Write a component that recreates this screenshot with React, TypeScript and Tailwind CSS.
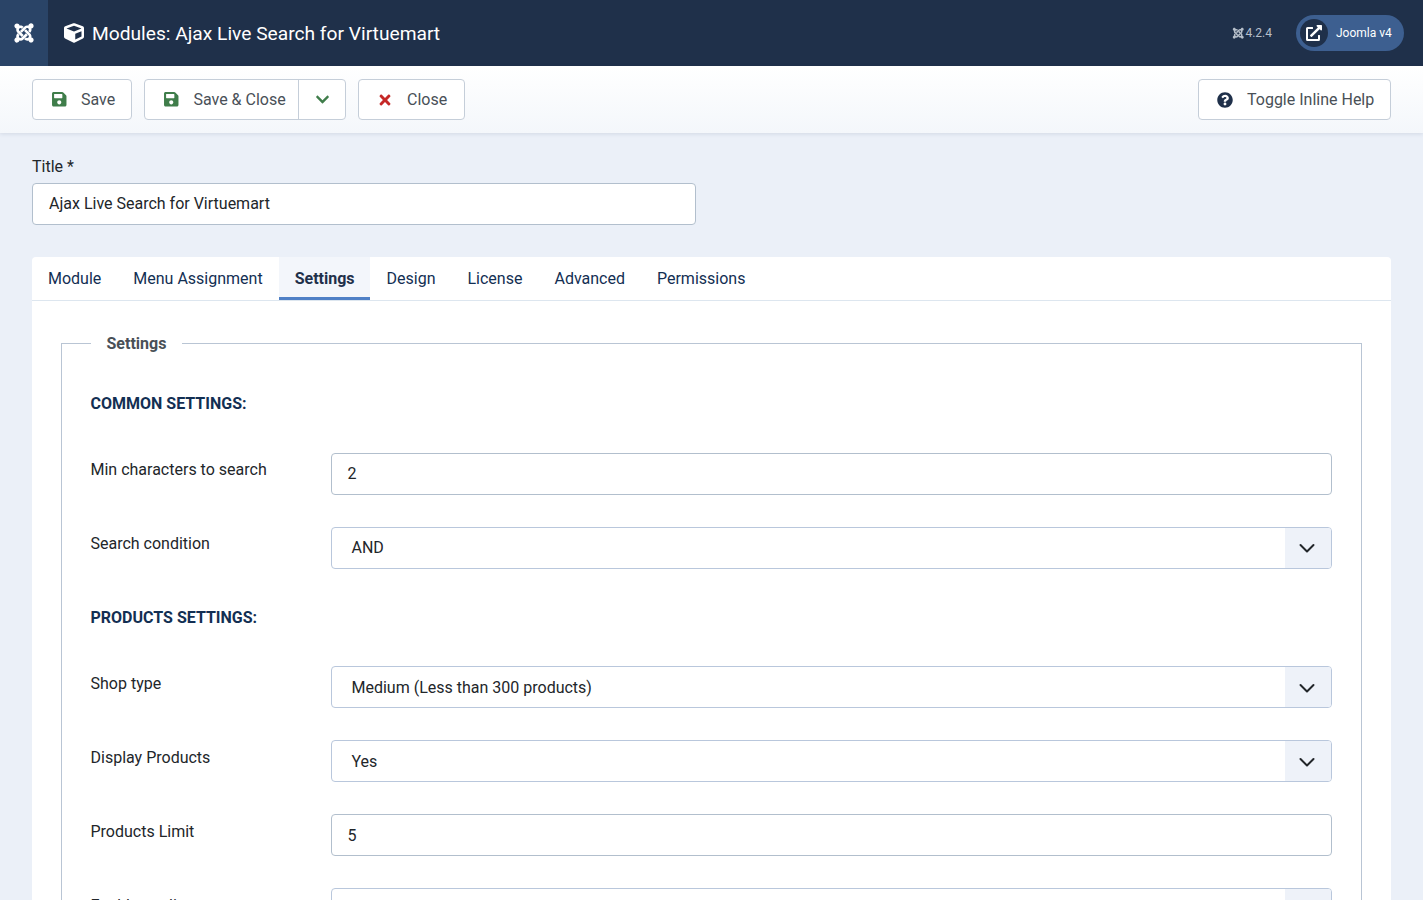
import { FaCube, FaChevronDown, FaExternalLinkAlt, FaJoomla, FaQuestionCircle, FaSave, FaTimes } from "react-icons/fa";
import type { ReactNode } from "react";

const tabs = ["Module", "Menu Assignment", "Settings", "Design", "License", "Advanced", "Permissions"];

function ToolbarButton({ icon, label, className }: { icon: ReactNode; label: string; className?: string }) {
  return (
    <button className={`flex h-[41px] items-center rounded border border-[#c5ced9] bg-white pl-[17px] text-[16px] text-[#495057] ${className ?? ""}`}>
      <span className="mr-[13px] flex w-[18px] justify-center">{icon}</span>
      {label}
    </button>
  );
}

function Row({ label, children, className, low }: { label: string; children: ReactNode; className?: string; low?: boolean }) {
  return (
    <div className={`flex ${className ?? ""}`}>
      <label className={`w-[240px] shrink-0 indent-[-0.5px] text-[16px] leading-6 text-[#22262a] ${low ? "pt-[6px]" : "pt-[5px]"}`}>{label}</label>
      <div className="min-w-0 flex-1">{children}</div>
    </div>
  );
}

function TextBox({ value, className, low }: { value: string; className?: string; low?: boolean }) {
  return (
    <div className={`flex h-[42px] items-center rounded border border-[#b2bfcd] bg-white text-[16px] text-[#22262a] ${className ?? "px-[15.5px]"}`}>
      <span className={low ? "pt-[2px]" : ""}>{value}</span>
    </div>
  );
}

function SelectBox({ value, low }: { value: string; low?: boolean }) {
  return (
    <div className="flex h-[42px] items-center justify-between overflow-hidden rounded border border-[#b9c7dc] bg-white text-[16px] text-[#22262a]">
      <span className={`pl-[19.5px] ${low ? "pt-[2px]" : ""}`}>{value}</span>
      <span className={`flex h-full w-[46px] items-center justify-center bg-[#eef2f9] pr-[3px] ${low ? "pt-[2px]" : ""}`}>
        <svg width="16" height="16" viewBox="0 0 16 16" fill="none" stroke="#22262a" strokeWidth="2" strokeLinecap="round" strokeLinejoin="round">
          <path d="M1.5 5 8 11.5 14.5 5" />
        </svg>
      </span>
    </div>
  );
}

export default function App() {
  return (
    <div className="h-screen overflow-hidden bg-[#ebf0f8] font-['Roboto',sans-serif]">
      <header className="flex h-[66px] items-center bg-[#1f304a] text-white">
        <div className="flex h-full w-12 items-center justify-center bg-[#2a4467]">
          <FaJoomla className="text-[22px]" />
        </div>
        <div className="ml-[16px] flex flex-1 items-center">
          <FaCube className="mr-[8px] text-[20px]" />
          <h1 className="pt-[2px] text-[19.2px] font-normal leading-6">Modules: Ajax Live Search for Virtuemart</h1>
        </div>
        <div className="mr-6 flex items-center gap-[1px] text-[12px] text-[#b6bfca]">
          <FaJoomla className="text-[12.5px]" />
          4.2.4
        </div>
        <div className="mr-[19px] flex h-9 w-[108px] items-center rounded-full bg-[#3d5f90] pl-1 text-[12px]">
          <span className="mr-[8px] flex h-7 w-7 items-center justify-center rounded-full bg-[#1f304a]">
            <FaExternalLinkAlt className="text-[16px]" />
          </span>
          Joomla v4
        </div>
      </header>

      <div className="flex h-[67px] items-center justify-between bg-gradient-to-b from-white to-[#f4f7fb] px-8 shadow-[0_1px_4px_rgba(30,50,90,0.12)]">
        <div className="flex items-center">
          <ToolbarButton className="w-[100px]" icon={<FaSave className="text-[16.5px] text-[#3f7d4a]" />} label="Save" />
          <div className="ml-3 flex h-[41px] rounded border border-[#c5ced9] bg-white text-[16px] text-[#495057]">
            <button className="flex w-[153px] items-center pl-[17px]">
              <span className="mr-[13.4px] flex w-[18px] justify-center">
                <FaSave className="text-[16.5px] text-[#3f7d4a]" />
              </span>
              Save &amp; Close
            </button>
            <button className="flex w-[47px] items-center justify-center border-l border-[#c5ced9]">
              <FaChevronDown className="text-[15px] text-[#3f7d4a]" />
            </button>
          </div>
          <ToolbarButton className="ml-3 w-[107px]" icon={<FaTimes className="text-[16px] text-[#c52827]" />} label="Close" />
        </div>
        <ToolbarButton className="w-[193px]" icon={<FaQuestionCircle className="text-[16px] text-[#1f304a]" />} label="Toggle Inline Help" />
      </div>

      <main className="px-8 pt-[22px]">
        <label className="block text-[16px] leading-6 text-[#22262a]">Title *</label>
        <div className="mt-[4px] w-[664px]">
          <TextBox value="Ajax Live Search for Virtuemart" className="px-4" />
        </div>

        <div className="mt-8 rounded-t bg-white">
          <nav className="flex h-[44px] border-b border-[#dde6ef] text-[16px] text-[#132f53]">
            {tabs.map((t) =>
              t === "Settings" ? (
                <span key={t} className="mr-px flex items-center border-b-[3px] border-[#4f80c6] bg-[#f3f6fb] pl-4 pr-[15px] pt-[3px] font-bold text-[#1f304a]">
                  {t}
                </span>
              ) : (
                <span key={t} className="flex items-center px-4">
                  {t}
                </span>
              ),
            )}
          </nav>

          <div className="px-[29px] pt-[32px]">
            <fieldset className="border border-[#b9c5d4] px-[29px] pb-6">
              <legend className="pl-[15.5px] pr-[15.5px] pt-[2px] text-[16px] font-bold leading-[18px] text-[#495057]">Settings</legend>
              <h3 className="mt-[39px] indent-[-0.5px] text-[16px] font-bold leading-6 text-[#132f53]">COMMON SETTINGS:</h3>
              <Row label="Min characters to search" className="mt-[37px]">
                <TextBox value="2" />
              </Row>
              <Row label="Search condition" className="mt-8">
                <SelectBox value="AND" />
              </Row>
              <h3 className="mt-[37px] indent-[-0.5px] text-[16px] font-bold leading-6 text-[#132f53]">PRODUCTS SETTINGS:</h3>
              <Row low label="Shop type" className="mt-[36px]">
                <SelectBox low value="Medium (Less than 300 products)" />
              </Row>
              <Row low label="Display Products" className="mt-8">
                <SelectBox low value="Yes" />
              </Row>
              <Row low label="Products Limit" className="mt-8">
                <TextBox low value="5" />
              </Row>
              <Row low label="Enable quality" className="mt-8">
                <SelectBox low value="No" />
              </Row>
            </fieldset>
          </div>
        </div>
      </main>
    </div>
  );
}
